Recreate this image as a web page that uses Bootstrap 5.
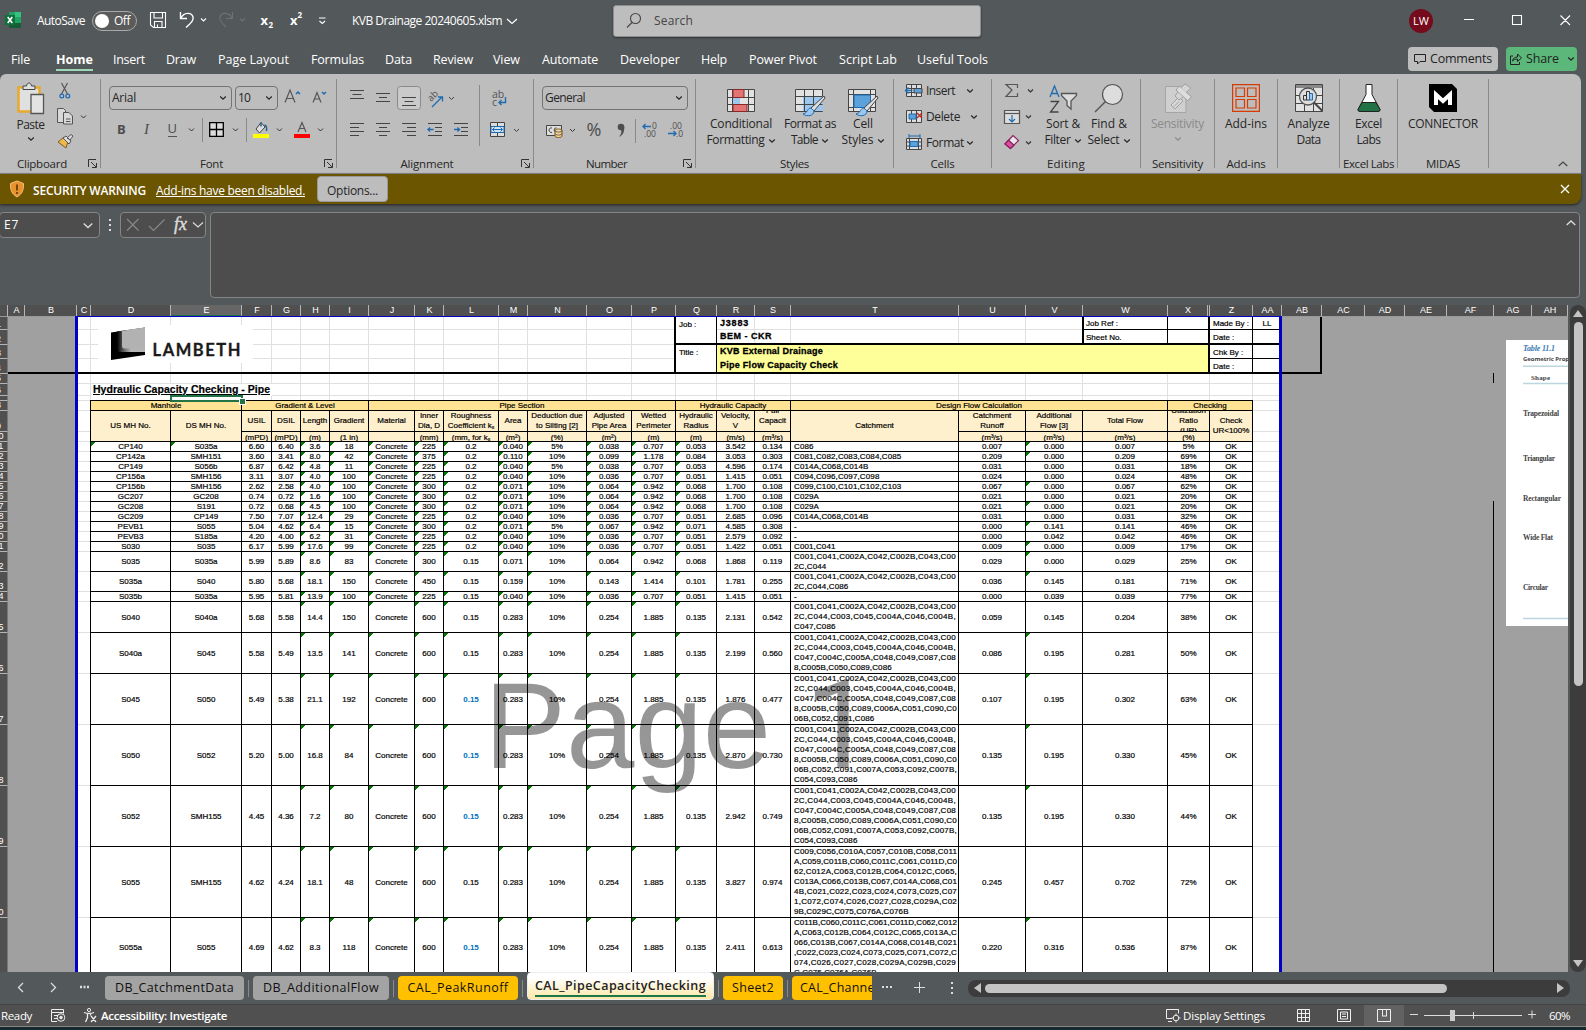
<!DOCTYPE html>
<html lang="en">
<head>
<meta charset="utf-8">
<title>KVB Drainage 20240605.xlsm</title>
<meta name="viewport" content="width=device-width, initial-scale=1">
<link href="https://cdn.jsdelivr.net/npm/bootstrap@5.3.0/dist/css/bootstrap.min.css" rel="stylesheet">
<style>
html,body{height:100%}
body{width:1586px;height:1030px;overflow:hidden;background:#53585a;color:#fff;font:12px/16px "Open Sans","Noto Sans",sans-serif}
svg{display:block;flex:none;overflow:visible}
.fit{display:inline-block;white-space:nowrap}
.titlebar{height:41px}
.toggle{width:45px;height:20px;border:1px solid #a8a8a8;border-radius:10px;padding:0 6px 0 2px;background:#5b5b5b}
.knob{width:14px;height:14px;border-radius:50%;background:#fff}
.searchbox{width:368px;height:32px;background:#bdbdbd;border:1px solid #8e8e8e;border-radius:3px;color:#444;box-shadow:0 1px 2px #333}
.avatar{width:24px;height:24px;border-radius:50%;background:#750b1c;font-size:11px}
.tabs{height:33px;font-size:12.5px;padding-top:8px}
.tabs li{height:22px;line-height:21px}
.tabs .on{font-weight:700;border-bottom:2px solid #9fd8b8}
.tbtn{height:24px;border-radius:4px;color:#222;padding:0 6px;font-size:12.5px}
.ribbon{width:1581px;height:100px;background:#bdbdbd;border-radius:6px 8px 0 0;color:#262626;border-bottom:1px solid #8c8c8c}
.rgroup{height:89px;margin-top:5px;border-right:1px solid #8a8a8a;position:relative}
.rlabel{height:16px;margin-bottom:-4px;font-size:11.5px}
.rbody{height:77px}
.rbox{height:24px;border:1px solid #737373;border-radius:4px;padding:0 4px 0 2px}
.launch{position:absolute;right:3px;bottom:0}
.big{padding-top:4px}
.cap{height:16px}
.warning{width:1581px;height:30px;background:#6b5500;border-radius:0 0 8px 0;box-shadow:0 1px 3px #222}
.optbtn{width:71px;height:26px;background:#bdbdbd;border:1px solid #999;border-radius:4px;color:#262626}
.fbar{height:101px;padding-top:8px}
.fbox{background:#4d4d4d;border:1px solid #858585;border-radius:4px}
.sheet{display:grid;position:relative;width:1568px;height:667px;overflow:hidden;background:#a0a0a0;color:#000;font:8px/10px "Liberation Sans",Arial,sans-serif;
grid-template-columns:8px 17px 52px 14px 80px 71px 30px 29px 29px 39px 46px 29px 55px 29px 59px 45px 44px 41px 38px 36px 168px 67px 57px 85px 40px 2px 43px 29px 40px 43px 40px 42px 47px 38px 36px;
grid-template-rows:12px 13px 15px 14px 15px 10px 12px 5px 10px 21px 10px repeat(11,10px) 20px 20px 10px 31px 41px 51px 61px 61px 71px 60px}
.sheet>div{overflow:hidden;min-width:0;min-height:0}
.hd{background:#505050;color:#fff;border-right:1px solid #b4b4b4;border-bottom:1px solid #9a9a9a;text-align:center;line-height:11px;font-size:9px;padding-left:1px}
.hd.sel{background:#666;border-bottom:2px solid #217346}
.rh{background:#505050;color:#fff;border-bottom:1px solid #b4b4b4;border-right:1px solid #777;display:flex;align-items:end;justify-content:center;font-size:9px;line-height:9px}
.rh span{margin-left:-10px}
.wh{background:#fff}
.yel{background:#ff9}
.gl{border-right:1px solid #e0e0e0;border-bottom:1px solid #e0e0e0}
.cell,.head1,.head2,.note{border-right:1px solid #000;border-bottom:1px solid #000;display:flex;align-items:center;justify-content:center;text-align:center;white-space:nowrap;-webkit-text-stroke:.2px #000}
.cell{background:#fff;line-height:9px}
.head1{background:#ffe395}
.head2{background:#fff0cd}
.head2 sub{font-size:5px;line-height:1}
.unit{padding-top:2px}
.note{justify-content:start;padding:2px 0 0 3px;background:#fff}
.note.key{align-items:start;padding-top:3px}
.note.mid{justify-content:center;padding-left:0}
.tri{background:linear-gradient(135deg,#007a00 3.2px,transparent 3.3px) #fff}
.cat{justify-content:start;align-items:start;text-align:left;padding-left:3px;letter-spacing:.12px;line-height:10px}
.blue{color:#0070c0;-webkit-text-stroke:0}
.boldish{font-weight:800;font-size:9px;line-height:10px;padding:.5px 0 0 3px;white-space:nowrap;-webkit-text-stroke:.3px #000}
.title6{font-size:10.5px;font-weight:700;padding-left:2px;line-height:11px;white-space:nowrap;background:#fff;-webkit-text-stroke:.2px #000}
.title6 .fit{text-decoration:underline}
.ln{background:#000}
.over{position:absolute}
.logo{left:98px;top:20px;width:155px;height:38px;background:#fff}
.frame{left:75px;top:11px;width:1207px;height:670px;border:3px solid #0000c8;border-top-width:1px;border-bottom:0}
.sheet>.wm{left:484px;top:359px;font-size:123px;line-height:123px;color:rgba(0,0,0,.41);white-space:pre;overflow:visible}
.wm span{font-family:Roboto,sans-serif;font-size:124px;line-height:1;margin-left:-1px}
.cursor{left:170px;top:90px;width:73px;height:7px;border:2px solid #217346}
.grip{left:239px;top:93px;width:5px;height:5px;background:#217346;border:1px solid #fff;box-sizing:content-box}
.pic{left:1506px;top:35px;width:62px;height:286px;background:#fff}
.vsb{width:16px;margin-left:2px;background:#3c3c3c;border-radius:8px}
.tabbar{height:32px}
.stab{height:24px;border-radius:4px;color:#111;font-size:12.5px;background:#a3a3a3;overflow:hidden;white-space:nowrap}
.stab.y{background:#ffc000}
.stab.act{height:28px;margin-top:-5px;background:linear-gradient(#fff 20%,#fde7a4);font-weight:600;color:#222;border:1px solid #eee;padding-top:2px}
.act .fit{border-bottom:2px solid #17794a;line-height:19px}
.tsep{width:1px;height:17px;background:#8a8a8a}
.hsb{width:602px;height:17px;border-radius:8px;background:#3c3c3c}
.hthumb{width:462px;height:9px;border-radius:5px;background:#c4c4c4}
.status{height:22px;background:#505050;border-top:1px solid #444;font-size:11.5px}
.viewon{width:40px;height:21px;background:#626262}
.edge{height:4px;background:#17282f;border-top:1px solid #858585}
</style>
<script src="https://cdn.jsdelivr.net/npm/bootstrap@5.3.0/dist/js/bootstrap.bundle.min.js"></script>
</head>
<body class="d-flex flex-column">
<svg width="0" height="0" class="position-absolute"><defs>
<symbol id="car" viewBox="0 0 8 6"><path d="M1.2 1.500 4 4.200 6.800 1.500" fill="none" stroke="currentColor" stroke-width="1.200"/></symbol>
<symbol id="lau" viewBox="0 0 9 9"><path d="M.5 8V.5H8M3 3l5 5M8.500 4v4.500H4" fill="none" stroke="#333"/></symbol>
</defs></svg>

<header class="titlebar d-flex align-items-center flex-shrink-0">
 <svg width="32" height="41" viewBox="0 0 32 41"><path d="M9 12h6v5H9z" fill="#21a366"/><path d="M15 12h6v5h-6z" fill="#33c481"/><path d="M9 17h6v6H9z" fill="#107c41"/><path d="M15 17h6v6h-6z" fill="#21a366"/><path d="M9 23h12v5H9z" fill="#185c37"/><path d="M5 15h10v10H5z" fill="#0e703b"/><path d="m7.700 17 4.600 6m0-6-4.600 6" stroke="#fff" stroke-width="1.600"/></svg>
 <span class="fit" data-w="48" style="margin-left:5px">AutoSave</span>
 <div class="toggle d-flex align-items-center justify-content-between" style="margin-left:7px"><i class="knob"></i><span class="fit" data-w="16">Off</span></div>
 <svg width="201" height="41" viewBox="137 0 201 41" fill="none" stroke="#fff" stroke-width="1.100"><path d="M150.500 12.500h15v15h-12l-3-2.500zM154 12.500v5.500h8.500v-5.500M154.500 27.500v-6h7.500v6M157.500 27.500v-3"/><path d="M180.500 12v6.500h6.500M181 18c3-6 10.500-6 12-1 .8 3-1 5-7 10.500" stroke-width="1.400"/><path d="m201 18.500 2.500 2.500 2.500-2.500"/><g stroke="#6e7274"><path d="M232.500 12v6.500H226M232 18c-3-6-10.500-6-12-1-.8 3 1 5 6 10"/><path d="m240 18.500 2.500 2.500 2.500-2.500"/></g><path d="M319 18h6.500M319.500 21l2.800 2.500 2.800-2.500"/><g fill="#fff" stroke="none" font-weight="700" font-size="13"><text x="260.500" y="25">x</text><text x="268.500" y="28" font-size="8">2</text><text x="290" y="25">x</text><text x="297.500" y="18" font-size="8">2</text></g></svg>
 <span class="fit" data-w="150" style="margin-left:14px">KVB Drainage 20240605.xlsm</span>
 <svg width="12" height="8" viewBox="0 0 12 8" class="ms-1"><path d="m1 2 5 4.500L11 2" fill="none" stroke="#fff" stroke-width="1.200"/></svg>
 <div class="searchbox d-flex align-items-center" style="margin-left:95px"><svg width="40" height="30" viewBox="0 0 40 30"><g fill="none" stroke="#444" stroke-width="1.100"><circle cx="21.500" cy="12.500" r="5"/><path d="m18 16.500-5 5"/></g></svg><span class="fit" data-w="39">Search</span></div>
 <div class="avatar d-flex align-items-center justify-content-center ms-auto">LW</div>
 <svg width="153" height="41" viewBox="1433 0 153 41" fill="none" stroke="#fff" stroke-width="1.100"><path d="M1464 19.500h10M1512.500 15.500h9v9h-9zM1560.500 15.500l9.500 9.500m0-9.500-9.500 9.500"/></svg>
</header>

<nav class="tabs d-flex flex-shrink-0">
 <ul class="list-unstyled d-flex m-0" id="tabs"></ul>
 <div class="d-flex ms-auto gap-2" style="margin-top:-2px;padding-right:9px">
  <div class="tbtn d-flex align-items-center gap-1" style="background:#bdbdbd;width:90px"><svg width="12" height="12" viewBox="0 0 12 12"><path d="M.5 1.500h11v7H6L3.500 11V8.500h-3z" fill="none" stroke="#222"/></svg><span class="fit" data-w="62">Comments</span></div>
  <div class="tbtn d-flex align-items-center gap-1" style="background:#5cb87a;width:71px;padding:0 4px"><svg width="12" height="12" viewBox="0 0 12 12"><path d="M3 3H.5v8.500h9V9M2.500 8C3 5 5 4 7.500 4V1L11.500 5 7.500 8.500V6C5 6 4 6.500 2.500 8z" fill="none" stroke="#222"/></svg><span class="fit" data-w="33">Share</span><svg width="8" height="6" class="ms-1"><use href="#car"/></svg></div>
 </div>
</nav>

<section class="ribbon d-flex flex-shrink-0">
 <div class="rgroup d-flex flex-column justify-content-between" style="width:101px">
  <div class="rbody d-flex">
   <div class="d-flex flex-column align-items-center" style="width:55px;padding:4px 0 0 6px"><svg width="32" height="34" viewBox="0 0 32 34"><path d="M3.500 4.500h21v24h-21z" fill="#e0e0e0" stroke="#e8a92c" stroke-width="2.500"/><path d="M8 6.500V3h3.500c.5-4 4.500-4 5 0H20v3.500z" fill="#e0e0e0" stroke="#444"/><path d="M16 11.500h12.500v19H16z" fill="#e3e3e3" stroke="#555" stroke-width="1.300"/></svg><span class="fit cap" data-w="28">Paste</span><svg width="8" height="6" style="margin-top:3px"><use href="#car"/></svg></div>
   <svg width="40" height="77" viewBox="55 79 40 77" fill="none"><path d="M61.500 83 67.500 94M67.500 83 61.500 94" stroke="#555" stroke-width="1.200"/><circle cx="61.800" cy="96" r="1.900" stroke="#1f6bb0" stroke-width="1.200"/><circle cx="67.800" cy="96" r="1.900" stroke="#1f6bb0" stroke-width="1.200"/><g stroke="#555" fill="#d8d8d8"><path d="M57.500 108.500h6l2 2v12h-8z"/><path d="M63.500 112.500h5.500l3.500 3.500v8h-9z"/><path d="M66 119h4.500M66 121.500h4.500"/></g><path d="m81 115.500 2.500 2.500 2.500-2.500" stroke="#333"/><path d="m58 142 6-5 4 4-2 7z" fill="#efb94a" stroke="#7a5a20"/><path d="m63 138 3-2 5 5-2 3zM67 138l4-3.500 2 1.500-3 4z" fill="#ddd" stroke="#555"/></svg>
  </div>
  <div class="rlabel text-center pe-4"><span class="fit" data-w="50" style="margin-left:8px">Clipboard</span></div><svg class="launch" width="9" height="9"><use href="#lau"/></svg>
 </div>
 <div class="rgroup d-flex flex-column justify-content-between" style="width:236px">
  <div class="rbody">
   <div class="d-flex gap-1" style="padding:7px 0 0 8px"><div class="rbox d-flex align-items-center justify-content-between" style="width:123px"><span class="fit" data-w="24">Arial</span><svg width="8" height="6"><use href="#car"/></svg></div><div class="rbox d-flex align-items-center justify-content-between" style="width:43px;margin-left:-1px"><span class="fit" data-w="12">10</span><svg width="8" height="6"><use href="#car"/></svg></div>
   <svg width="46" height="24" viewBox="281 86 46 24" fill="none" stroke="#555" stroke-width="1.200"><path d="m284 102.500 5-12.500 5 12.500m-8.300-4h6.600M312 102.500l4-10 4 10m-6.700-3.500h5.400"/><path d="m295 94 2-2 2 2M321 92l2 2 2-2" stroke="#1f6bb0" stroke-width="1.500"/></svg></div>
   <svg width="236" height="40" viewBox="101 110 236 40" fill="none"><g fill="#4d4d4d" font-size="13"><text x="117" y="134" font-weight="700">B</text><text x="144" y="134" font-style="italic" font-family="Liberation Serif,serif" font-size="15">I</text><text x="167.500" y="133">U</text></g><path d="M168 136.500h9" stroke="#555"/><g stroke="#333"><path d="m189 128.500 2.500 2.500 2.500-2.500M233 128.500l2.500 2.500 2.500-2.500M277 128.500l2.500 2.500 2.500-2.500M318 128.500l2.500 2.500 2.500-2.500"/></g><path d="M202.500 118v24M246.500 118v24" stroke="#8a8a8a"/><path d="M210 122.500h13v13.500h-13z" fill="#ddd"/><path d="M209.700 122.700h13.600v13.600h-13.600zM216.500 122.500v14M209.500 129.500h14" stroke="#000" stroke-width="1.300"/><path d="m256 129 5-6.500 4 4.500-5.500 6z" fill="#ddd" stroke="#444"/><path d="M261 122.500v4M264.500 125c2 .5 2.500 2.500 2 6" stroke="#1f5f8b" stroke-width="1.500"/><path d="M253 134h16v4h-16z" fill="#ff0"/><path d="M294 134h16v4h-16z" fill="#f00"/><path d="m298 132 4-9.500 4 9.500m-6.800-3.500h5.600" stroke="#555" stroke-width="1.200"/></svg>
  </div>
  <div class="rlabel text-center"><span class="fit" data-w="23" style="margin-left:-14px">Font</span></div><svg class="launch" width="9" height="9"><use href="#lau"/></svg>
 </div>
 <div class="rgroup d-flex flex-column justify-content-between" style="width:197px">
  <svg width="196" height="77" viewBox="337 79 196 77" fill="none" stroke="#444"><path d="M350 90.500h14M352.500 94.500h9M350 98.500h14M376 93.500h14M379 97.500h8M376 101.500h14"/><rect x="397.500" y="86.500" width="23" height="23" rx="3" fill="#cacaca" stroke="#8a8a8a"/><path d="M402 97.500h14M404.500 101.500h9M402 105.500h14"/><g fill="#555" stroke="none" font-size="9.500"><text transform="translate(431 102) rotate(-45)">ab</text><text x="492" y="97.500" font-size="10.500">ab</text><text x="492" y="106" font-size="10.500">c</text></g><path d="m432 107 10-10m-4 0h4.500v4.500" stroke="#1f6bb0" stroke-width="1.300"/><path d="m449 97 2.500 2.500 2.500-2.500M514 129l2.500 2.500 2.500-2.500"/><path d="M479.500 85v61" stroke="#8a8a8a"/><path d="M505.500 97v5.500h-6m2-2.500-2.500 2.500 2.500 2.500" stroke="#1f6bb0" stroke-width="1.400"/>
  <path d="M350 123.500h14M350 127.500h9M350 131.500h14M350 135.500h9M376 123.500h14M379 127.500h8M376 131.500h14M379 135.500h8M402 123.500h14M407 127.500h9M402 131.500h14M407 135.500h9M428 123.500h14M435 127.500h7M435 131.500h7M428 135.500h14M454 123.500h14M461 127.500h7M461 131.500h7M454 135.500h14"/><path d="M433.500 129.500H428m2-2-2 2 2 2M454 129.500h5.500m-2-2 2 2-2 2" stroke="#1f6bb0" stroke-width="1.400"/><path d="M490.500 122.500h14v14h-14z" fill="#ddd"/><path d="M490.500 126.500h14M490.500 132.500h14M497.500 122.500v4M497.500 132.500v4"/><path d="M491 126.500h13v6h-13z" fill="#cfe3f5" stroke="#1f6bb0"/><path d="M492.500 129.500h10m-8-2-2 2 2 2m6-4 2 2-2 2" stroke="#1f6bb0"/></svg>
  <div class="rlabel text-center"><span class="fit" data-w="53" style="margin-left:-16px">Alignment</span></div><svg class="launch" width="9" height="9"><use href="#lau"/></svg>
 </div>
 <div class="rgroup d-flex flex-column justify-content-between" style="width:162px">
  <div class="rbody"><div style="padding:7px 0 0 8px"><div class="rbox d-flex align-items-center justify-content-between" style="width:146px"><span class="fit" data-w="40">General</span><svg width="8" height="6"><use href="#car"/></svg></div></div>
  <svg width="161" height="40" viewBox="534 110 161 40" fill="none"><path d="M546.500 125.500h15v10h-15z" fill="#ddd" stroke="#444"/><path d="M552 128c-4-1-4 5 0 4.500M556.500 128c-3-1-3 5 0 4.500" stroke="#444"/><path d="M555 130.500c0-2 7-2 7 0v5.500c0 2-7 2-7 0zM555 130.500c0 2 7 2 7 0M555 133.500c0 2 7 2 7 0" fill="#f2d392" stroke="#7a5a20"/><path d="m570 129 2.500 2.500 2.500-2.500" stroke="#333"/><g fill="#4d4d4d"><text x="586.500" y="135.500" font-size="18">%</text><circle cx="621" cy="127" r="3.300"/><path d="M624.300 127c0 5-1 8-5.300 10 2-2.500 3-5 2-8z"/><text x="652" y="129" font-size="8.500">0</text><text x="644" y="137" font-size="8.500">.00</text><text x="670" y="129" font-size="8.500">.00</text><text x="676" y="137" font-size="8.500">.0</text></g><path d="M635.500 119v24" stroke="#8a8a8a"/><path d="M651 126.500h-8m2.500-2.500-2.500 2.500 2.500 2.500M668 133.500h8m-2.500-2.500 2.500 2.500-2.500 2.500" stroke="#1f6bb0" stroke-width="1.300"/></svg></div>
  <div class="rlabel text-center"><span class="fit" data-w="41" style="margin-left:-16px">Number</span></div><svg class="launch" width="9" height="9"><use href="#lau"/></svg>
 </div>
 <div class="rgroup d-flex flex-column justify-content-between" style="width:198px">
  <div class="rbody d-flex">
   <div class="big d-flex flex-column align-items-center" style="width:90px"><svg width="28" height="33" viewBox="0 0 28 33"><path d="M.5 6.500h27v22h-27z" fill="#e2e2e2" stroke="#444"/><path d="M5.500 6v23M21.500 6v23M.5 14.500h27M.5 21.500h27" stroke="#444"/><path d="M6 6.500h11v8H6zM6 21.500h14v7H6z" fill="#e27474" stroke="#8c2727"/><path d="M6 15h7v6H6z" fill="#9cc8ef"/></svg><span class="fit cap" data-w="62">Conditional</span><span class="cap"><span class="fit" data-w="58">Formatting</span> <svg width="8" height="6" class="d-inline"><use href="#car"/></svg></span></div>
   <div class="big d-flex flex-column align-items-center" style="width:48px"><svg width="30" height="33" viewBox="0 0 30 33"><path d="M.5 6.500h27v22h-27z" fill="#e2e2e2" stroke="#444"/><path d="M8 13h20v15H8z" fill="#9cc8ef"/><path d="M9.500 6v23M18.500 6v23M.5 13.500h27M.5 21.500h27" stroke="#444"/><path d="M29 13 16 25l3 3 11-13z" fill="#ddd" stroke="#444"/><path d="M16 25c-4 0-3 5-8 6 4 3 11 2 11-3z" fill="#9cc8ef" stroke="#1f6bb0"/></svg><span class="fit cap" data-w="52">Format as</span><span class="cap text-nowrap"><span class="fit" data-w="27">Table</span> <svg width="8" height="6" class="d-inline"><use href="#car"/></svg></span></div>
   <div class="big d-flex flex-column align-items-center" style="width:58px"><svg width="30" height="33" viewBox="0 0 30 33"><path d="M.5 6.500h27v22h-27z" fill="#e2e2e2" stroke="#444"/><path d="M5.500 6v23M22.500 6v23M.5 11.500h27M.5 24.500h27" stroke="#444"/><path d="M6 12h16.500v12.500H6z" fill="#5ba1da" stroke="#1f6bb0"/><path d="M29 13 16 25l3 3 11-13z" fill="#ddd" stroke="#444"/><path d="M16 25c-4 0-3 5-8 6 4 3 11 2 11-3z" fill="#9cc8ef" stroke="#1f6bb0"/></svg><span class="fit cap" data-w="20">Cell</span><span class="cap text-nowrap"><span class="fit" data-w="32">Styles</span> <svg width="8" height="6" class="d-inline"><use href="#car"/></svg></span></div>
  </div>
  <div class="rlabel text-center"><span class="fit" data-w="29">Styles</span></div>
 </div>
 <div class="rgroup d-flex flex-column justify-content-between" style="width:98px">
  <div class="rbody d-flex">
   <svg width="32" height="77" viewBox="894 79 32 77" fill="#ddd" stroke="#444"><path d="M906.500 84.500h15v12h-15zM906.500 88.500h15M906.500 92.500h15M911.500 84.500v12M916.500 84.500v12"/><path d="M914 88.500h8v4.500h-8z" fill="#5ba1da"/><path d="M912.500 90.500h-7m3-3-3 3 3 3" fill="none" stroke="#1f6bb0" stroke-width="1.400"/><path d="M906.500 110.500h15v12h-15zM911.500 110.500v12M916.500 110.500v12"/><path d="M909 114h7v5h-7z" fill="#5ba1da" stroke="#1f6bb0"/><path d="m917 113 5 5m0-5-5 5" stroke="#c42b1c" stroke-width="1.400"/><path d="M906.500 138.500h15v11h-15zM906.500 142h15M906.500 146h15M909.500 138.500v11M918.500 138.500v11"/><path d="M910 141.500h8v5h-8z" fill="#5ba1da" stroke="#1f6bb0"/><path d="M909 136h11m-11-2v4m11-4v4" fill="none" stroke="#1f6bb0"/></svg>
   <div class="d-flex flex-column" style="width:62px;padding-top:4px;gap:10px">
    <div class="d-flex align-items-center justify-content-between" style="width:48px"><span class="fit" data-w="29">Insert</span><svg width="8" height="6"><use href="#car"/></svg></div>
    <div class="d-flex align-items-center justify-content-between" style="width:52px"><span class="fit" data-w="34">Delete</span><svg width="8" height="6"><use href="#car"/></svg></div>
    <div class="d-flex align-items-center justify-content-between" style="width:48px"><span class="fit" data-w="38">Format</span><svg width="8" height="6"><use href="#car"/></svg></div>
   </div>
  </div>
  <div class="rlabel text-center"><span class="fit" data-w="24">Cells</span></div>
 </div>
 <div class="rgroup d-flex flex-column justify-content-between" style="width:149px">
  <div class="rbody d-flex">
   <svg width="48" height="77" viewBox="992 79 48 77" fill="none" stroke="#555" stroke-width="1.200"><path d="M1017.500 88v-3.500h-11.500l6 5.500-6 6.500h11.500V93"/><path d="m1028 89.500 2.500 2.500 2.500-2.500M1026 115.500l2.500 2.500 2.500-2.500M1026 141.500l2.500 2.500 2.500-2.500" stroke="#333"/><path d="M1004.500 110.500h15v13h-15z" fill="#ddd"/><path d="M1004.500 113.500h15"/><path d="M1012 115v7m-3-3 3 3 3-3" stroke="#1f6bb0"/><path d="m1005 144 8-8.500 5.500 5-8 8z" fill="#e8e8e8" stroke="#8a1e60"/><path d="m1005 144 3.500-3.800 5.500 5-3.500 3.300z" fill="#d8509f" stroke="#8a1e60"/></svg>
   <div class="big d-flex flex-column align-items-center" style="width:46px"><svg width="30" height="33" viewBox="0 0 30 33" fill="none" stroke-width="1.300"><path d="M2 14 6.500 3 11 14M3.500 10.500h6" stroke="#1f6bb0"/><path d="M2.500 18.500h8l-8 10.500h8" stroke="#444"/><path d="M13.500 10.500h15v2l-5.500 5.500v8l-4-3.500V18l-5.500-5.500z" fill="#ddd" stroke="#555"/></svg><span class="fit cap" data-w="34">Sort &amp;</span><span class="cap text-nowrap"><span class="fit" data-w="26">Filter</span> <svg width="8" height="6" class="d-inline"><use href="#car"/></svg></span></div>
   <div class="big d-flex flex-column align-items-center" style="width:46px"><svg width="30" height="33" viewBox="0 0 30 33"><circle cx="18.500" cy="11.500" r="10" fill="#ddd" stroke="#555" stroke-width="1.200"/><path d="M11.500 18.500 1 29" stroke="#555" stroke-width="1.400"/></svg><span class="fit cap" data-w="36">Find &amp;</span><span class="cap text-nowrap"><span class="fit" data-w="32">Select</span> <svg width="8" height="6" class="d-inline"><use href="#car"/></svg></span></div>
  </div>
  <div class="rlabel text-center"><span class="fit" data-w="38">Editing</span></div>
 </div>
 <div class="rgroup d-flex flex-column justify-content-between" style="width:74px">
  <div class="rbody big d-flex flex-column align-items-center" style="color:#8b8b8b"><svg width="28" height="33" viewBox="0 0 28 33"><path d="M1.500 3.500h20.500v26h-20.500z" fill="#cfcfcf" stroke="#a5a5a5"/><path d="m7 18 4-4 8 8-4 4z" fill="#d8d8d8" stroke="#a0a0a0" transform="rotate(90 13 20)"/><path d="m10 18.500 5 5" stroke="#a0a0a0" transform="rotate(90 12.500 21)"/><path d="m12 7 3.500-4 12 11-4 3.500z" fill="#ddd" stroke="#a0a0a0"/><path d="M17 4.500 21 1l6 4-5 4.500M14 9l-3 4 4 4 4-3" fill="#d4d4d4" stroke="#a0a0a0"/></svg><span class="fit cap" data-w="53">Sensitivity</span><svg width="8" height="6" class="mt-1"><use href="#car"/></svg></div>
  <div class="rlabel text-center"><span class="fit" data-w="51">Sensitivity</span></div>
 </div>
 <div class="rgroup d-flex flex-column justify-content-between" style="width:63px">
  <div class="rbody big d-flex flex-column align-items-center"><svg width="28" height="33" viewBox="0 0 28 33" fill="none" stroke="#d83b01" stroke-width="1.200"><path d="M.6 1.600h26.800v26.800H.6zM4 5h8.500v8.500H4zM15.500 5H24v8.500h-8.500zM4 16.500h8.500V25H4zM15.500 16.500H24V25h-8.500z"/></svg><span class="fit cap" data-w="42">Add-ins</span></div>
  <div class="rlabel text-center"><span class="fit" data-w="39">Add-ins</span></div>
 </div>
 <div class="rgroup d-flex flex-column justify-content-between" style="width:62px">
  <div class="rbody big d-flex flex-column align-items-center"><svg width="28" height="33" viewBox="0 0 28 33"><path d="M.5 1.500h27v27H.5z" fill="#e2e2e2" stroke="#444"/><path d="M1 2h26v3H1z" fill="#888"/><path d="M.5 12.500h27M.5 20.500h27M9.500 5v23M18.500 5v23" stroke="#444"/><circle cx="13" cy="13.500" r="8.500" fill="#ddd" stroke="#555" stroke-width="1.300"/><path d="m19 19.500 8.500 8.500" stroke="#444" stroke-width="2"/><path d="M8.500 12.500h3V17h-3zM11.500 8.500h3V17h-3z" fill="#ddd" stroke="#333"/><path d="M14.500 10.500h3V17h-3z" fill="#9cc8ef" stroke="#1f6bb0"/></svg><span class="fit cap" data-w="42">Analyze</span><span class="fit cap" data-w="24">Data</span></div>
  <div></div>
 </div>
 <div class="rgroup d-flex flex-column justify-content-between" style="width:58px">
  <div class="rbody big d-flex flex-column align-items-center"><svg width="28" height="33" viewBox="0 0 28 33"><path d="M11 1.500h6v10l8 15q0 2-2 2H5q-2 0-2-2l8-15z" fill="#fff" stroke="#222"/><path d="M7 19.500h14l4 7q0 2-2 2H5q-2 0-2-2z" fill="#217346" stroke="#222"/></svg><span class="fit cap" data-w="27">Excel</span><span class="fit cap" data-w="24">Labs</span></div>
  <div class="rlabel text-center"><span class="fit" data-w="51">Excel Labs</span></div>
 </div>
 <div class="rgroup d-flex flex-column justify-content-between" style="width:91px">
  <div class="rbody big d-flex flex-column align-items-center"><svg width="28" height="33" viewBox="0 0 28 33"><path d="M0 1h23l5 5v23H5l-5-5z" fill="#000"/><path d="M7 22V11.500l7 6.500 7-6.500V22" fill="none" stroke="#fff" stroke-width="4"/></svg><span class="fit cap" data-w="70">CONNECTOR</span></div>
  <div class="rlabel text-center"><span class="fit" data-w="34">MIDAS</span></div>
 </div>
 <svg width="10" height="6" viewBox="0 0 10 6" class="ms-auto align-self-end" style="margin:0 13px 6px 0"><path d="m.7 5 4.300-4 4.300 4" fill="none" stroke="#444" stroke-width="1.200"/></svg>
</section>

<section class="warning d-flex align-items-center flex-shrink-0">
 <svg width="33" height="30" viewBox="0 0 33 30"><path d="m17 7 6.500 2.500c0 7-1 10-6.500 13.500-5.500-3.500-6.500-6.500-6.500-13.500z" fill="#e8912d" stroke="#f5c27a"/><path d="M17 10.500v6M17 18v2" stroke="#5a3500" stroke-width="1.600"/></svg>
 <span class="fit fw-semibold pt-1" data-w="113">SECURITY WARNING</span><span class="fit text-decoration-underline pt-1" data-w="149" style="margin-left:10px">Add-ins have been disabled.</span>
 <div class="optbtn d-flex align-items-center justify-content-center pt-1" style="margin-left:12px"><span class="fit" data-w="51">Options...</span></div>
 <svg width="10" height="10" viewBox="0 0 10 10" class="ms-auto" style="margin-right:11px"><path d="m1 1 8 8m0-8L1 9" stroke="#fff" stroke-width="1.300"/></svg>
</section>

<section class="fbar d-flex align-items-start flex-shrink-0">
 <div class="fbox d-flex align-items-center justify-content-between" style="width:101px;height:26px;margin-left:-1px;padding:0 6px 0 4px"><span class="fit" data-w="15">E7</span><svg width="10" height="7" viewBox="0 0 10 7"><path d="m.7 1.500 4.300 4 4.300-4" fill="none" stroke="#ddd" stroke-width="1.300"/></svg></div>
 <svg width="20" height="26" viewBox="0 0 20 26" fill="#ddd"><path d="M9 7h2v2H9zM9 12h2v2H9zM9 17h2v2H9z"/></svg>
 <div class="fbox" style="width:86px;height:26px"><svg width="84" height="24" viewBox="121 213 84 24" fill="none"><path d="m127 219 11.500 11.500m0-11.500L127 230.500M149 226l4.500 4.500 11-11" stroke="#888" stroke-width="1.200"/><path d="m193 222.500 5 4.500 5-4.500" stroke="#ddd" stroke-width="1.200"/><text x="174" y="230" fill="#ddd" stroke="#ddd" stroke-width=".4" font-family="Liberation Serif,serif" font-style="italic" font-size="18">fx</text></svg></div>
 <div class="fbox d-flex justify-content-end" style="width:1370px;height:86px;margin-left:4px"><svg width="10" height="6" viewBox="0 0 10 6" style="margin:7px 3px"><path d="m.7 5 4.300-4 4.300 4" fill="none" stroke="#ddd" stroke-width="1.300"/></svg></div>
</section>

<main class="d-flex flex-shrink-0">
 <div class="sheet" id="sheet"></div>
 <div class="vsb"><svg width="16" height="667" viewBox="0 0 16 667" fill="#c4c4c4"><path d="m8 5 5 7H3z"/><rect x="4" y="17" width="9" height="364" rx="4.500"/><path d="m8 662-5-7h10z"/></svg></div>
</main>

<footer class="flex-shrink-0">
 <div class="tabbar d-flex align-items-center">
  <svg width="105" height="32" viewBox="0 0 105 32" fill="none" stroke="#ddd" stroke-width="1.300"><path d="m23 11-4.500 4.500L23 20M51 11l4.500 4.500L51 20"/><path d="M80 15h2M83.500 15h2M87 15h2" stroke-width="2.400"/></svg>
  <div class="stab d-flex align-items-center justify-content-center" style="width:139px"><span class="fit" data-w="119">DB_CatchmentData</span></div><i class="tsep mx-1"></i>
  <div class="stab d-flex align-items-center justify-content-center" style="width:136px"><span class="fit" data-w="116">DB_AdditionalFlow</span></div><i class="tsep mx-1"></i>
  <div class="stab y d-flex align-items-center justify-content-center" style="width:120px"><span class="fit" data-w="101">CAL_PeakRunoff</span></div><i class="tsep mx-1"></i>
  <div class="stab act d-flex align-items-center justify-content-center" style="width:187px"><span class="fit" data-w="171">CAL_PipeCapacityChecking</span></div><i class="tsep mx-1"></i>
  <div class="stab y d-flex align-items-center justify-content-center" style="width:60px"><span class="fit" data-w="42">Sheet2</span></div><i class="tsep mx-1"></i>
  <div class="stab y d-flex align-items-center rounded-end-0" style="width:80px;padding-left:8px"><span class="fit" data-w="78">CAL_Channel</span></div>
  <svg width="96" height="32" viewBox="872 0 96 32" fill="none" stroke="#ddd"><path d="M882 15h2M886 15h2M890 15h2M951 11h2M951 16h2M951 21h2" stroke-width="2"/><path d="M919.500 10v11M914 15.500h11"/></svg>
  <div class="hsb d-flex align-items-center justify-content-between" style="padding:0 6px"><svg width="7" height="10" viewBox="0 0 7 10"><path d="M7 0v10L0 5z" fill="#c4c4c4"/></svg><div class="hthumb me-auto" style="margin-left:4px"></div><svg width="7" height="10" viewBox="0 0 7 10"><path d="M0 0v10l7-5z" fill="#c4c4c4"/></svg></div>
 </div>
 <div class="status d-flex align-items-center">
  <span class="fit" data-w="31" style="margin-left:1px">Ready</span>
  <svg width="69" height="21" viewBox="32 1005 69 21" fill="none" stroke="#eee"><path d="M51.500 1009.500h12v4M57 1021.500h-5.500v-12M51.500 1012.500h12M54 1015.500h4M54 1018.500h3"/><circle cx="61" cy="1017.500" r="3.800"/><circle cx="61" cy="1017.500" r="1.300" fill="#eee"/><circle cx="89" cy="1010" r="1.600"/><path d="M84 1012.500c4 1.500 6 1.500 10 0M87.500 1013.500v4l-2 4.500M90.500 1013.500v2M91 1016l5 6m0-6-5 6" stroke-width="1.300"/></svg>
  <span class="fit fw-semibold" data-w="126">Accessibility: Investigate</span>
  <svg width="17" height="21" viewBox="1166 1005 17 21" class="ms-auto" fill="none" stroke="#eee"><path d="M1172 1018.500h-5.500v-9h12v4M1168 1021.500h4"/><circle cx="1176" cy="1018" r="2.800"/><path d="M1176 1013.500v9M1171.500 1018h9" stroke-dasharray="2 5"/></svg>
  <span class="fit" data-w="82">Display Settings</span>
  <svg width="99" height="21" viewBox="1265 1005 99 21" fill="none" stroke="#eee"><path d="M1297.500 1009.500h12v12h-12zM1301.500 1009v12M1305.500 1009v12M1297 1013.500h12M1297 1017.500h12M1337.500 1009.500h13v12h-13zM1340.500 1012h7v7h-7zM1342 1014h4M1342 1016.500h4"/></svg>
  <div class="viewon"><svg width="40" height="21" viewBox="1364 1005 40 21" fill="none" stroke="#eee"><path d="M1377.500 1009.500h13v12h-13zM1382.500 1009v7M1386.500 1009v7M1382 1016h5"/></svg></div>
  <svg width="145" height="21" viewBox="1404 1005 145 21" fill="none" stroke="#ddd"><path d="M1410 1014.500h8M1424 1015.500h98M1473.500 1012v7M1528 1014.500h8M1532 1010.500v8"/><path d="M1450 1010h5v11h-5z" fill="#ccc" stroke="none"/></svg>
  <span class="fit" data-w="21" style="margin-right:16px">60%</span>
 </div>
 <div class="edge"></div>
</footer>

<script>
// ribbon tabs: label, text width, gap before
[["File",19,11],["Home",37,26],["Insert",32,20],["Draw",30,21],["Page Layout",71,22],["Formulas",53,22],["Data",27,21],["Review",40,21],["View",27,20],["Automate",56,22],["Developer",60,22],["Help",26,21],["Power Pivot",68,22],["Script Lab",58,22],["Useful Tools",71,20]].forEach(([t,w,g])=>{
  tabs.insertAdjacentHTML("beforeend",`<li class="${t=="Home"?"on":""}" style="margin-left:${g}px"><span class="fit" data-w="${w}">${t}</span></li>`);
});
// worksheet
const L="A B C D E F G H I J K L M N O P Q R S T U V W X Y Z AA AB AC AD AE AF AG AH".split(" ");
const col=n=>L.indexOf(n)+2;
let out="";
// columns a..b and sheet rows r..s
function put(a,r,b,s,html,cls){out+=`<div class="${cls}" style="grid-area:${r+1}/${col(a)}/${s+2}/${col(b)+1}">${html}</div>`}
out+='<div class="hd" style="grid-area:1/1/2/2"></div>';
L.forEach(n=>put(n,0,n,0,n=="Y"?"":n,"hd"+(n=="E"?" sel":"")));
for(let r=1;r<=31;r++)out+=`<div class="rh" style="grid-area:${r+1}/1/${r+2}/2"><span>${r==31?"":r}</span></div>`;
put("C",1,"AA",31,"","wh");
const inner=L.slice(2,27);
for(let r=1;r<=7;r++)inner.forEach(n=>{if(n!="Y")put(n,r,n=="X"?"Y":n,r,"","gl")});
for(let r=8;r<=31;r++){put("C",r,"C",r,"","gl");put("AA",r,"AA",r,"","gl")}
// title block
put("Q",1,"Q",2,"Job :","note key");put("Q",3,"Q",4,"Title :","note key");
put("R",3,"Y",4,"","yel");
put("R",1,"R",1,'<span class="fit" data-w="29">J3883</span>',"boldish");
put("R",2,"S",2,'<span class="fit" data-w="52">BEM - CKR</span>',"boldish");
put("R",3,"T",3,'<span class="fit" data-w="103">KVB External Drainage</span>',"boldish");
put("R",4,"T",4,'<span class="fit" data-w="118">Pipe Flow Capacity Check</span>',"boldish");
put("W",1,"W",1,"Job Ref :","note");put("W",2,"W",2,"Sheet No.","note");put("X",1,"Y",1,"","note");put("X",2,"Y",2,"","note");
["Made By :","Date :","Chk By :","Date :"].forEach((t,i)=>{put("Z",i+1,"Z",i+1,t,"note");put("AA",i+1,"AA",i+1,i?"":"LL","note mid")});
put("D",6,"F",6,'<span class="fit" data-w="177">Hydraulic Capacity Checking - Pipe</span>',"title6");
// table headings
[["D","E","Manhole"],["F","I","Gradient &amp; Level"],["J","P","Pipe Section"],["Q","S","Hydraulic Capacity"],["T","W","Design Flow Calculation"],["X","Z","Checking"]].forEach(([a,b,t])=>put(a,8,b,8,t,"head1"));
put("D",9,"D",10,"US MH No.","head2");put("E",9,"E",10,"DS MH No.","head2");put("T",9,"T",10,"Catchment","head2");put("Z",9,"Z",10,"Check<br>UR&lt;100%","head2");
const m3="(m³/s)";
[["F","USIL","(mPD)"],["G","DSIL","(mPD)"],["H","Length","(m)"],["I","Gradient","(1 in)"],["J","Material",""],["K","Inner<br>Dia, D","(mm)"],["L","Roughness<br>Coefficient k<sub>s</sub>","(mm, for k<sub>s</sub>"],["M","Area","(m²)"],["N","Deduction due<br>to Silting [2]","(%)"],["O","Adjusted<br>Pipe Area","(m²)"],["P","Wetted<br>Perimeter","(m)"],["Q","Hydraulic<br>Radius","(m)"],["R","Velocity,<br>V","(m/s)"],["S","Full<br>Capacit<br>&nbsp;",m3],["U","Catchment<br>Runoff",m3],["V","Additional<br>Flow [3]",m3],["W","Total Flow",m3],["X","Utilization<br>Ratio<br>(UR)","(%)"]].forEach(([a,t,u])=>{const b=a=="X"?"Y":a;put(a,9,b,9,`<span>${t}</span>`,"head2");put(a,10,b,10,`<span>${u}</span>`,"head2 unit")});
const A="C001,C041,C002A,C042,C002B,C043,C00",B=A+"|2C,C044,C003,C045,C004A,C046,C004B,|",C=B+"C047,C004C,C005A,C048,C049,C087,C08|",D=C+"8,C005B,C050,C089,C006A,C051,C090,C0|",E=D+"06B,C052,C091,C007A,C053,C092,C007B,|C054,C093,C086";
const rows=`CP140 S035a 6.60 6.40 3.6 18 225 0.2 0.040 5% 0.038 0.707 0.053 3.542 0.134 C086 0.007 0.000 0.007 5%
CP142a SMH151 3.60 3.41 8.0 42 375 0.2 0.110 10% 0.099 1.178 0.084 3.053 0.303 C081,C082,C083,C084,C085 0.209 0.000 0.209 69%
CP149 S056b 6.87 6.42 4.8 11 225 0.2 0.040 5% 0.038 0.707 0.053 4.596 0.174 C014A,C068,C014B 0.031 0.000 0.031 18%
CP156a SMH156 3.11 3.07 4.0 100 225 0.2 0.040 10% 0.036 0.707 0.051 1.415 0.051 C094,C096,C097,C098 0.024 0.000 0.024 48%
CP156b SMH156 2.62 2.58 4.0 100 300 0.2 0.071 10% 0.064 0.942 0.068 1.700 0.108 C099,C100,C101,C102,C103 0.067 0.000 0.067 62%
GC207 GC208 0.74 0.72 1.6 100 300 0.2 0.071 10% 0.064 0.942 0.068 1.700 0.108 C029A 0.021 0.000 0.021 20%
GC208 S191 0.72 0.68 4.5 100 300 0.2 0.071 10% 0.064 0.942 0.068 1.700 0.108 C029A 0.021 0.000 0.021 20%
GC209 CP149 7.50 7.07 12.4 29 225 0.2 0.040 10% 0.036 0.707 0.051 2.685 0.096 C014A,C068,C014B 0.031 0.000 0.031 32%
PEVB1 S055 5.04 4.62 6.4 15 300 0.2 0.071 5% 0.067 0.942 0.071 4.585 0.308 - 0.000 0.141 0.141 46%
PEVB3 S185a 4.20 4.00 6.2 31 225 0.2 0.040 10% 0.036 0.707 0.051 2.579 0.092 - 0.000 0.042 0.042 46%
S030 S035 6.17 5.99 17.6 99 225 0.2 0.040 10% 0.036 0.707 0.051 1.422 0.051 C001,C041 0.009 0.000 0.009 17%
S035 S035a 5.99 5.89 8.6 83 300 0.15 0.071 10% 0.064 0.942 0.068 1.868 0.119 ${A}|2C,C044 0.029 0.000 0.029 25%
S035a S040 5.80 5.68 18.1 150 450 0.15 0.159 10% 0.143 1.414 0.101 1.781 0.255 ${A}|2C,C044,C086 0.036 0.145 0.181 71%
S035b S035a 5.95 5.81 13.9 100 225 0.15 0.040 10% 0.036 0.707 0.051 1.415 0.051 - 0.000 0.039 0.039 77%
S040 S040a 5.68 5.58 14.4 150 600 0.15 0.283 10% 0.254 1.885 0.135 2.131 0.542 ${B}C047,C086 0.059 0.145 0.204 38%
S040a S045 5.58 5.49 13.5 141 600 0.15 0.283 10% 0.254 1.885 0.135 2.199 0.560 ${C}8,C005B,C050,C089,C086 0.086 0.195 0.281 50%
S045 S050 5.49 5.38 21.1 192 600 0.15 0.283 10% 0.254 1.885 0.135 1.876 0.477 ${D}06B,C052,C091,C086 0.107 0.195 0.302 63%
S050 S052 5.20 5.00 16.8 84 600 0.15 0.283 10% 0.254 1.885 0.135 2.870 0.730 ${E} 0.135 0.195 0.330 45%
S052 SMH155 4.45 4.36 7.2 80 600 0.15 0.283 10% 0.254 1.885 0.135 2.942 0.749 ${E} 0.135 0.195 0.330 44%
S055 SMH155 4.62 4.24 18.1 48 600 0.15 0.283 10% 0.254 1.885 0.135 3.827 0.974 C009,C056,C010A,C057,C010B,C058,C011|A,C059,C011B,C060,C011C,C061,C011D,C0|62,C012A,C063,C012B,C064,C012C,C065,|C013A,C066,C013B,C067,C014A,C068,C01|4B,C021,C022,C023,C024,C073,C025,C07|1,C072,C074,C026,C027,C028,C029A,C02|9B,C029C,C075,C076A,C076B 0.245 0.457 0.702 72%
S055a S055 4.69 4.62 8.3 118 600 0.15 0.283 10% 0.254 1.885 0.135 2.411 0.613 C011B,C060,C011C,C061,C011D,C062,C012|A,C063,C012B,C064,C012C,C065,C013A,C|066,C013B,C067,C014A,C068,C014B,C021|,C022,C023,C024,C073,C025,C071,C072,C|074,C026,C027,C028,C029A,C029B,C029|C,C075,C076A,C076B 0.220 0.316 0.536 87%`.split("\n");
const noV=[2,3,5,7,9,13,14,19];
rows.forEach((line,i)=>{
  const v=line.split(" ");v.splice(6,0,"Concrete");v.push("OK");
  const r=11+i;
  "D E F G H I J K L M N O P Q R S T U V W X Z".split(" ").forEach((n,k)=>{
    let cls="cell";
    if("HIJKLMNOPQ".includes(n)||(n=="V"&&!noV.includes(i))||(i==0&&"DE".includes(n)))cls+=" tri";
    if(n=="T")cls+=" cat";
    if(n=="L"&&[16,17,18,20].includes(i))cls+=" blue fw-bold";
    // catchment lines that fill the cell are spread to the same width
    const txt=n=="T"?v[k].split("|").map(s=>s.length>34?`<span class="fit" data-w="${s.length>35?163:162}">${s}</span>`:s).join("<br>"):v[k];
    put(n,r,n=="X"?"Y":n,r,`<span>${txt}</span>`,cls);
  });
});
// heavy frame lines: left, top, width, height inside the sheet pane
[[8,67,1314,2],[1320,12,2,57],[674,12,2,57],[716,12,1,57],[675,38,607,2],[1082,12,2,27],[1208,12,2,57],[1493,68,1,10],[1493,196,1,471],[90,95,1163,1],[90,95,1,572]].forEach(([x,y,w,h])=>out+=`<div class="over ln" style="left:${x}px;top:${y}px;width:${w}px;height:${h}px"></div>`);
out+='<div class="over logo"><svg width="155" height="38" viewBox="98 325 155 38"><defs><linearGradient id="lg"><stop offset="0" stop-color="#000"/><stop offset=".3" stop-color="#777"/><stop offset=".5" stop-color="#b5b5b5"/></linearGradient></defs><path d="M111 332.500 145 327.500V355L111 360z" fill="#000"/><path d="M117 331.500 145 327.500V352H120q-3 0-3-4z" fill="url(#lg)"/><path d="M122 331 145 327.500V348.500H124q-2 0-2-3z" fill="#b2b2b2"/><text x="152.500" y="355.500" font-family="Lato,sans-serif" font-weight="700" font-size="16.500" fill="#1a1a1a" stroke="#1a1a1a" stroke-width=".3" textLength="88">LAMBETH</text></svg></div>';
out+='<div class="over frame"></div><div class="over cursor"></div><div class="over grip"></div><div class="over wm">Page <span>1</span></div>';
out+='<div class="over pic"><svg width="62" height="285" viewBox="1506 340 62 285" font-family="Liberation Serif,serif" font-size="7.500" font-weight="700" fill="#444"><g stroke="#bcd5de" stroke-width="1.500"><path d="M1523 366.300h45M1523 383.600h45M1523 618.500h45"/></g><text x="1523" y="351" font-style="italic" fill="#3a7ab5" font-size="8" textLength="32">Table 11.1</text><text x="1523" y="360.500" font-family="Open Sans,sans-serif" font-size="6" textLength="63">Geometric Properties</text><text x="1531" y="380" font-size="7" textLength="19">Shape</text><text x="1523" y="416" textLength="36">Trapezoidal</text><text x="1523" y="461" textLength="32">Triangular</text><text x="1523" y="501" textLength="38">Rectangular</text><text x="1523" y="540" textLength="30">Wide Flat</text><text x="1523" y="590" textLength="25">Circular</text></svg></div>';
sheet.innerHTML=out;
// spread each label over its measured width
document.querySelectorAll(".fit").forEach(e=>{
  const w=+e.dataset.w,n=e.textContent.length;
  const s=parseFloat(getComputedStyle(e).letterSpacing)||0;
  e.style.letterSpacing=(s+(w-e.getBoundingClientRect().width)/n).toFixed(3)+"px";
});
</script>
</body>
</html>
